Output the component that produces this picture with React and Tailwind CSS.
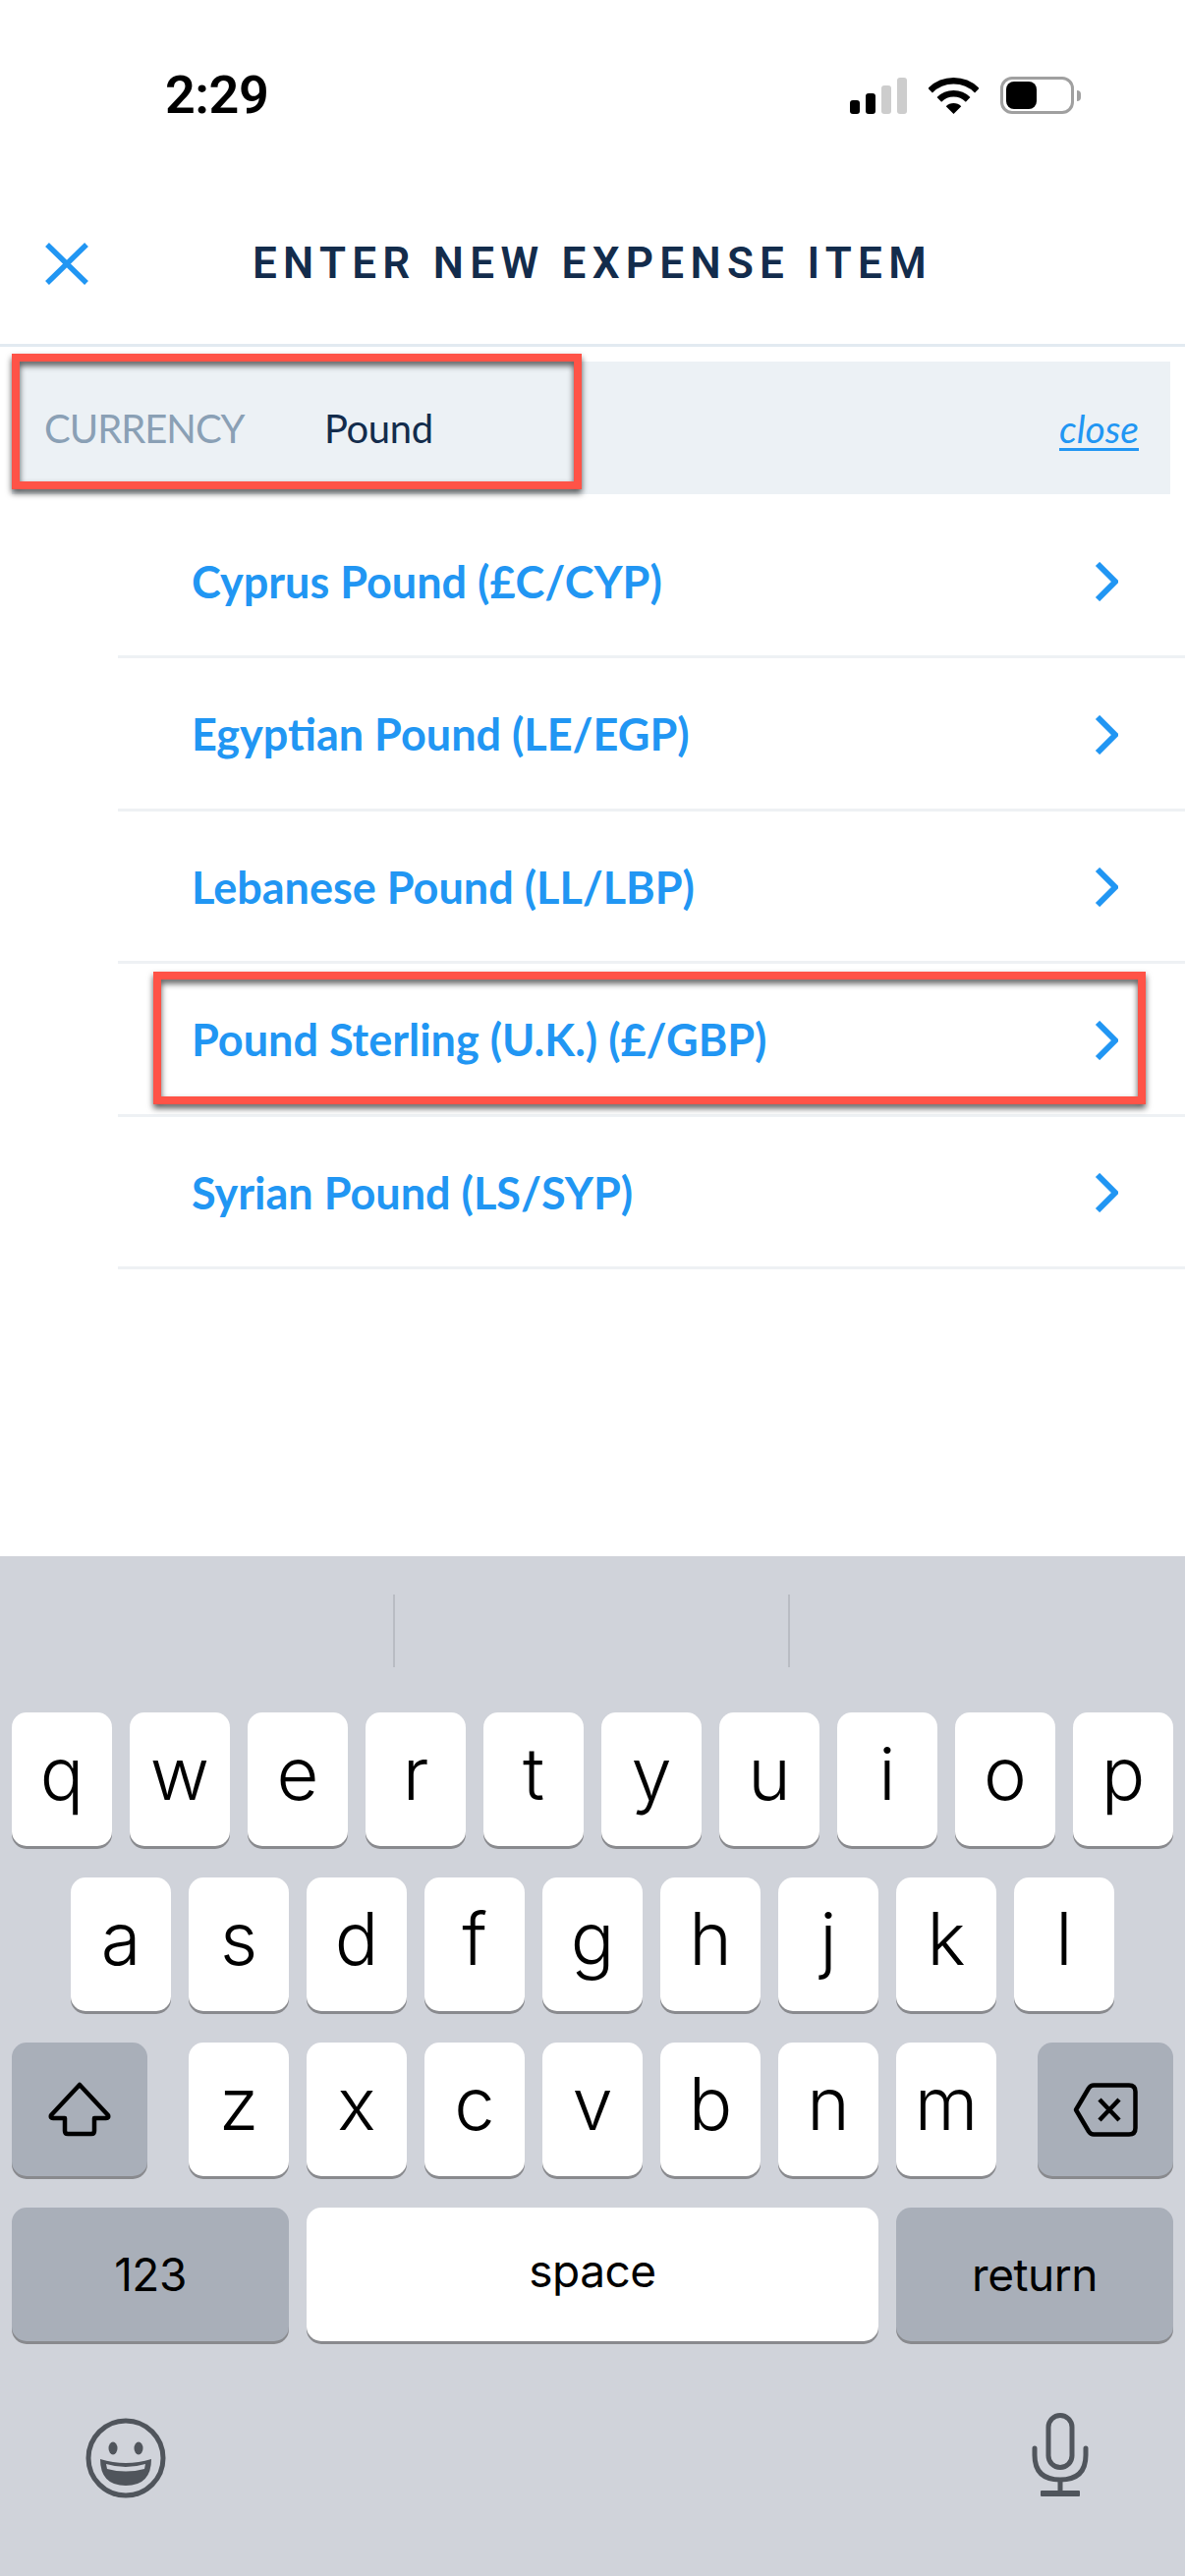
const currencies = [
  { label: 'Cyprus Pound (£C/CYP)' },
  { label: 'Egyptian Pound (LE/EGP)' },
  { label: 'Lebanese Pound (LL/LBP)' },
  { label: 'Pound Sterling (U.K.) (£/GBP)', marked: true },
  { label: 'Syrian Pound (LS/SYP)' },
]

const rowOne = ['q', 'w', 'e', 'r', 't', 'y', 'u', 'i', 'o', 'p']
const rowTwo = ['a', 's', 'd', 'f', 'g', 'h', 'j', 'k', 'l']
const rowThree = ['z', 'x', 'c', 'v', 'b', 'n', 'm']

function StatusBar() {
  return (
    <div className="flex h-[38px] items-start justify-between pl-[168px] pr-[106px]">
      <span className="font-['Roboto',sans-serif] text-[54px] font-semibold leading-[38px] tracking-[-0.5px] text-black">2:29</span>
      <div className="flex items-end">
        <div className="flex items-end gap-[6px]">
          <span className="h-[14px] w-[10px] rounded-[3px] bg-black" />
          <span className="h-[21px] w-[10px] rounded-[3px] bg-black" />
          <span className="h-[29px] w-[10px] rounded-[3px] bg-[#cdcdcd]" />
          <span className="h-[37px] w-[10px] rounded-[3px] bg-[#cdcdcd]" />
        </div>
        <svg className="ml-[22px]" width="51" height="37" viewBox="0 0 51 37" fill="none">
          <path d="M1.64 13.14A33.75 33.75 0 0 1 49.36 13.14" stroke="#000" strokeWidth="6.5" />
          <path d="M10.83 22.33A20.75 20.75 0 0 1 40.17 22.33" stroke="#000" strokeWidth="6.5" />
          <path d="M25.5 37L17.72 29.22A11 11 0 0 1 33.28 29.22Z" fill="#000" />
        </svg>
        <div className="ml-[22px] flex items-center">
          <div className="flex h-[38px] w-[75px] items-center rounded-[12px] border-[3px] border-[#a0a0a0] pl-[3px]">
            <span className="h-[28px] w-[31px] rounded-[8px] bg-black" />
          </div>
          <span className="ml-[3px] h-[11px] w-[4px] rounded-r-full bg-[#a0a0a0]" />
        </div>
      </div>
    </div>
  )
}

function Header() {
  return (
    <div className="relative mt-[130px] flex h-[107px] justify-center border-b-[3px] border-[#e2eaf1] pt-[3px]">
      <svg className="absolute left-[46px] top-[1px]" width="44" height="43" viewBox="0 0 44 43" fill="none">
        <path d="M2 2L42 41M42 2L2 41" stroke="#2196f3" strokeWidth="5.5" />
      </svg>
      <h1 className="font-['Roboto',sans-serif] text-[44px] font-semibold leading-[38px] tracking-[6.3px] text-[#132c4c]">
        ENTER NEW EXPENSE ITEM
      </h1>
    </div>
  )
}

function Marker({ className }) {
  return (
    <div
      className={`pointer-events-none absolute border-[8px] border-[#ff5347] drop-shadow-[0_4px_3px_rgba(0,0,0,0.65)] ${className}`}
    />
  )
}

function CurrencyBar() {
  return (
    <div className="relative ml-[12px] mr-[15px] mt-[15px] flex h-[135px] items-center bg-[#ecf1f5] font-['Lato',sans-serif] text-[40px]">
      <span className="ml-[33px] w-[285px] tracking-[-1px] text-[#8aa0b5]">CURRENCY</span>
      <span className="tracking-[-0.4px] text-[#132c4c]">Pound</span>
      <span className="ml-auto mr-[32px] pt-[2px] text-[39px] italic text-[#2196f3] underline underline-offset-[5px]">close</span>
      <Marker className="left-0 top-[-8px] h-[138px] w-[580px]" />
    </div>
  )
}

function CurrencyRow({ label, marked }) {
  return (
    <li className="relative ml-[120px] flex h-[155.5px] items-center justify-between border-b-[3px] border-[#eef1f4] pl-[75px] pr-[68px] pt-[3px]">
      <span className="font-['Lato',sans-serif] text-[45px] font-bold text-[#2196f3]">{label}</span>
      <svg width="24" height="40" viewBox="0 0 24 40" fill="none">
        <path d="M3 2L21 20L3 38" stroke="#2196f3" strokeWidth="6" />
      </svg>
      {marked && <Marker className="left-[36px] right-[40px] top-[8px] h-[135px]" />}
    </li>
  )
}

function Key({ children, dark, className = 'w-[102px]', text = 'text-[74px] font-light pb-[12px]' }) {
  return (
    <div
      className={`flex h-[136px] items-center justify-center rounded-[15px] shadow-[0_3px_0_#898a8e] ${dark ? 'bg-[#a9afb9]' : 'bg-white'} font-['Inter',sans-serif] ${text} text-black ${className}`}
    >
      {children}
    </div>
  )
}

function ShiftIcon() {
  return (
    <svg width="64" height="56" viewBox="0 0 64 56" fill="none">
      <path
        d="M32 3L61 34Q62 37 59 37H47V50Q47 53 44 53H20Q17 53 17 50V37H5Q2 37 3 34Z"
        stroke="#000"
        strokeWidth="4.5"
        strokeLinejoin="round"
      />
    </svg>
  )
}

function DeleteIcon() {
  return (
    <svg width="66" height="55" viewBox="0 0 66 55" fill="none">
      <path
        d="M21 2.5H57Q63.5 2.5 63.5 9V46Q63.5 52.5 57 52.5H21Q18 52.5 16 49.5L3 27.5L16 5.5Q18 2.5 21 2.5Z"
        stroke="#000"
        strokeWidth="4.5"
        strokeLinejoin="round"
      />
      <path d="M27 17L47 38M47 17L27 38" stroke="#000" strokeWidth="4.5" />
    </svg>
  )
}

function EmojiIcon() {
  return (
    <svg width="82" height="82" viewBox="0 0 82 82" fill="none">
      <circle cx="41" cy="41" r="38" stroke="#50555c" strokeWidth="5" />
      <ellipse cx="28" cy="31" rx="4.5" ry="6.5" fill="#50555c" />
      <ellipse cx="54" cy="31" rx="4.5" ry="6.5" fill="#50555c" />
      <path d="M15 42Q41 50 67 42Q67 69 41 69Q15 69 15 42Z" fill="#50555c" />
      <path d="M21 47Q41 53 61 47L60 52Q41 57 22 52Z" fill="#d0d3da" />
    </svg>
  )
}

function MicIcon() {
  return (
    <svg width="58" height="86" viewBox="0 0 58 86" fill="none">
      <rect x="17" y="2.5" width="24" height="53" rx="12" stroke="#50555c" strokeWidth="5" />
      <path d="M3 36V43Q3 68 29 68Q55 68 55 43V36" stroke="#50555c" strokeWidth="5" strokeLinecap="round" />
      <path d="M29 68V80" stroke="#50555c" strokeWidth="5" />
      <rect x="9" y="79" width="40" height="6" rx="1" fill="#50555c" />
    </svg>
  )
}

function Keyboard() {
  return (
    <div className="mt-auto flex h-[1038px] flex-col bg-[#d0d3da] px-[12px]">
      <div className="flex h-[159px] justify-center gap-[400px] pr-[2px] pt-[39px]">
        <span className="h-[74px] w-[2px] bg-[#b9bcc3]" />
        <span className="h-[74px] w-[2px] bg-[#b9bcc3]" />
      </div>
      <div className="flex flex-col gap-[32px]">
        <div className="flex justify-between">
          {rowOne.map((k) => (
            <Key key={k}>{k}</Key>
          ))}
        </div>
        <div className="flex justify-center gap-[18px]">
          {rowTwo.map((k) => (
            <Key key={k}>{k}</Key>
          ))}
        </div>
        <div className="flex justify-between">
          <Key dark className="w-[138px]" text="">
            <ShiftIcon />
          </Key>
          <div className="flex gap-[18px]">
            {rowThree.map((k) => (
              <Key key={k}>{k}</Key>
            ))}
          </div>
          <Key dark className="w-[138px]" text="">
            <DeleteIcon />
          </Key>
        </div>
        <div className="flex gap-[18px]">
          <Key dark className="w-[282px]" text="text-[46px] tracking-[-0.5px] pt-[1px]">
            123
          </Key>
          <Key className="flex-1" text="text-[46px] tracking-[-0.5px] pb-[8px]">
            space
          </Key>
          <Key dark className="w-[282px]" text="text-[46px] tracking-[-0.5px] pt-[1px]">
            return
          </Key>
        </div>
      </div>
      <div className="mt-[73px] flex items-start justify-between pl-[75px] pr-[86px]">
        <div className="pt-[5px]">
          <EmojiIcon />
        </div>
        <MicIcon />
      </div>
    </div>
  )
}

export default function App() {
  return (
    <div className="flex h-[2622px] w-[1206px] flex-col overflow-hidden bg-white pt-[78px]">
      <StatusBar />
      <Header />
      <CurrencyBar />
      <ul className="mt-[11.5px]">
        {currencies.map((c) => (
          <CurrencyRow key={c.label} label={c.label} marked={c.marked} />
        ))}
      </ul>
      <Keyboard />
    </div>
  )
}
